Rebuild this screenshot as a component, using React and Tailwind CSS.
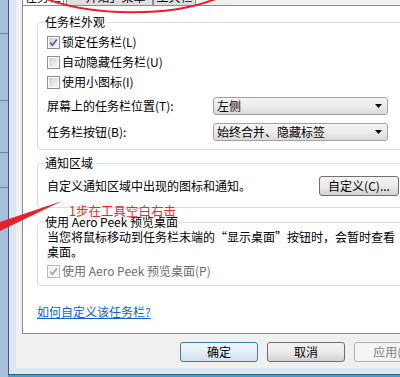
import React from 'react';

function Box({ checked, disabled }) {
  return (
    <span
      className={`w-[13px] h-[13px] shrink-0 border bg-white p-px flex ${
        disabled ? 'border-[#b8b8b8]' : 'border-[#8e8f8f]'
      }`}
    >
      <span
        className={`flex-1 flex items-center justify-center ${
          disabled ? 'bg-[#f4f4f4]' : 'bg-gradient-to-br from-[#cdd1d7] to-[#f7f7f7]'
        }`}
      >
        {checked && (
          <svg width="9" height="9" viewBox="0 0 9 9">
            <path
              d="M1.2 4.6 L3.4 7.2 L7.8 1.4"
              fill="none"
              stroke={disabled ? '#a3a3a3' : '#4a5f9c'}
              strokeWidth="1.6"
            />
          </svg>
        )}
      </span>
    </span>
  );
}

function CheckRow({ checked, disabled, children }) {
  return (
    <div className={`h-[20px] flex items-center gap-[2px] ${disabled ? 'text-[#6d6d6d]' : ''}`}>
      <Box checked={checked} disabled={disabled} />
      <span className="leading-[14px]">{children}</span>
    </div>
  );
}

function Select({ value }) {
  return (
    <div className="w-[175px] h-[18px] shrink-0 border border-[#a3a3a3] rounded-[3px] bg-gradient-to-b from-[#f5f5f5] via-[#ececec] to-[#dadada] flex items-center pl-[3px] pr-[5px]">
      <span className="flex-1 leading-[14px]">{value}</span>
      <svg width="7" height="4" viewBox="0 0 7 4">
        <path d="M0 0 H7 L3.5 4 Z" fill="#000" />
      </svg>
    </div>
  );
}

function Button({ children, primary, disabled, w = 'w-[78px]' }) {
  const look = primary
    ? 'border-[#3c7fb1] bg-gradient-to-b from-[#f1f7fc] via-[#e3eef8] to-[#cfe2f1]'
    : disabled
    ? 'border-[#adb2b5] bg-[#f4f4f4] text-[#838383]'
    : 'border-[#707070] bg-gradient-to-b from-[#f2f2f2] via-[#ebebeb] to-[#d2d2d2]';
  return (
    <div className={`${w} h-[20px] shrink-0 border rounded-[3px] flex items-center justify-center leading-[14px] ${look}`}>
      {children}
    </div>
  );
}

function Tab({ children, selected, w }) {
  return (
    <div
      className={`${w} h-[20px] shrink-0 border border-b-0 border-[#898c95] rounded-t-[2px] flex items-end justify-center pb-px leading-[14px] ${
        selected ? 'bg-white' : 'bg-gradient-to-b from-[#f2f2f2] to-[#dcdcdc]'
      }`}
    >
      {children}
    </div>
  );
}

export default function App() {
  return (
    <div className="w-[400px] h-[377px] overflow-hidden relative flex bg-[#a6bfdc] text-[12px] text-black font-['Noto_Sans_CJK_SC',sans-serif]">
      {/* window behind, left edge */}
      <div className="w-[8px] shrink-0 flex flex-col">
        <div className="h-[34px] border-b border-[#7187a4]" />
        <div className="h-[67px] border-b border-[#7187a4]" />
        <div className="h-[52px] border-b border-[#7187a4]" />
        <div className="h-[35px] border-b border-[#7187a4]" />
        <div className="flex-1" />
      </div>

      <div className="flex-1 min-w-0 flex flex-col">
        {/* dialog frame */}
        <div className="flex-1 min-h-0 flex flex-col border-l border-b border-[#4c5866] bg-[#dbe7f4] pl-[7px] pb-[6px]">
          <div className="flex-1 min-h-0 flex flex-col bg-[#f0f0f0] pl-[6px]">
            {/* tabs */}
            <div className="h-[5px] shrink-0 overflow-hidden flex items-end">
              <Tab selected w="w-[42px]">任务栏</Tab>
              <div className="w-[2px] shrink-0" />
              <Tab w="w-[87px]">「开始」菜单</Tab>
              <Tab w="w-[43px]">工具栏</Tab>
            </div>

            {/* tab page */}
            <div className="w-[398px] h-[329px] shrink-0 border border-[#898c95] bg-white flex flex-col pt-[9px]">
              <fieldset className="ml-[14px] mr-[8px] border border-[#d5dfe5] rounded-[3px] pl-[9px] pr-[11px] pt-[3px] pb-[8px]">
                <legend className="-ml-[3px] px-px leading-[14px]">任务栏外观</legend>
                <CheckRow checked>锁定任务栏(L)</CheckRow>
                <CheckRow>自动隐藏任务栏(U)</CheckRow>
                <CheckRow>使用小图标(I)</CheckRow>
                <div className="mt-[5px] flex items-center">
                  <span className="w-[166px] shrink-0 leading-[14px]">屏幕上的任务栏位置(T):</span>
                  <Select value="左侧" />
                </div>
                <div className="mt-[8px] flex items-center">
                  <span className="w-[166px] shrink-0 leading-[14px]">任务栏按钮(B):</span>
                  <Select value="始终合并、隐藏标签" />
                </div>
              </fieldset>

              <fieldset className="mt-[6px] ml-[14px] mr-[8px] border border-[#d5dfe5] rounded-[3px] pl-[9px] pr-[11px] pt-[6px] pb-[11px]">
                <legend className="-ml-[3px] px-px leading-[14px]">通知区域</legend>
                <div className="h-[20px] flex items-center">
                  <span className="flex-1 leading-[14px]">自定义通知区域中出现的图标和通知。</span>
                  <Button w="w-[80px]">自定义(C)...</Button>
                </div>
              </fieldset>

              <fieldset className="mt-[7px] ml-[14px] mr-[8px] border border-[#d5dfe5] rounded-[3px] pl-[9px] pr-[11px] pb-[4px]">
                <legend className="-ml-[3px] px-px leading-[14px]">使用 Aero Peek 预览桌面</legend>
                <p className="leading-[15px] whitespace-nowrap">
                  当您将鼠标移动到任务栏末端的“显示桌面”按钮时，会暂时查看
                  <br />
                  桌面。
                </p>
                <div className="mt-[2px]">
                  <CheckRow checked disabled>使用 Aero Peek 预览桌面(P)</CheckRow>
                </div>
              </fieldset>

              <div className="mt-[19px] ml-[14px] leading-[14px] text-[#0a66cc] underline">如何自定义该任务栏?</div>
            </div>

            {/* dialog buttons */}
            <div className="mt-[8px] ml-[158px] flex gap-[9px]">
              <Button primary>确定</Button>
              <Button>取消</Button>
              <Button disabled>应用(A)</Button>
            </div>
          </div>
        </div>
        {/* taskbar edge */}
        <div className="h-[2px] shrink-0 bg-[#27a9e1]" />
      </div>

      {/* red annotations drawn over the screenshot */}
      <svg className="absolute inset-0 pointer-events-none" width="400" height="377" viewBox="0 0 400 377">
        <path d="M44 -2 C 90 16, 170 18, 218 -2" fill="none" stroke="#e8202a" strokeWidth="2" />
        <polygon points="0,222 62,201 0,231" fill="#e8202a" />
      </svg>
      <span className="absolute left-[69px] top-[204px] leading-[14px] text-[12.5px] text-[#ff2424]">1步在工具空白右击</span>
    </div>
  );
}
